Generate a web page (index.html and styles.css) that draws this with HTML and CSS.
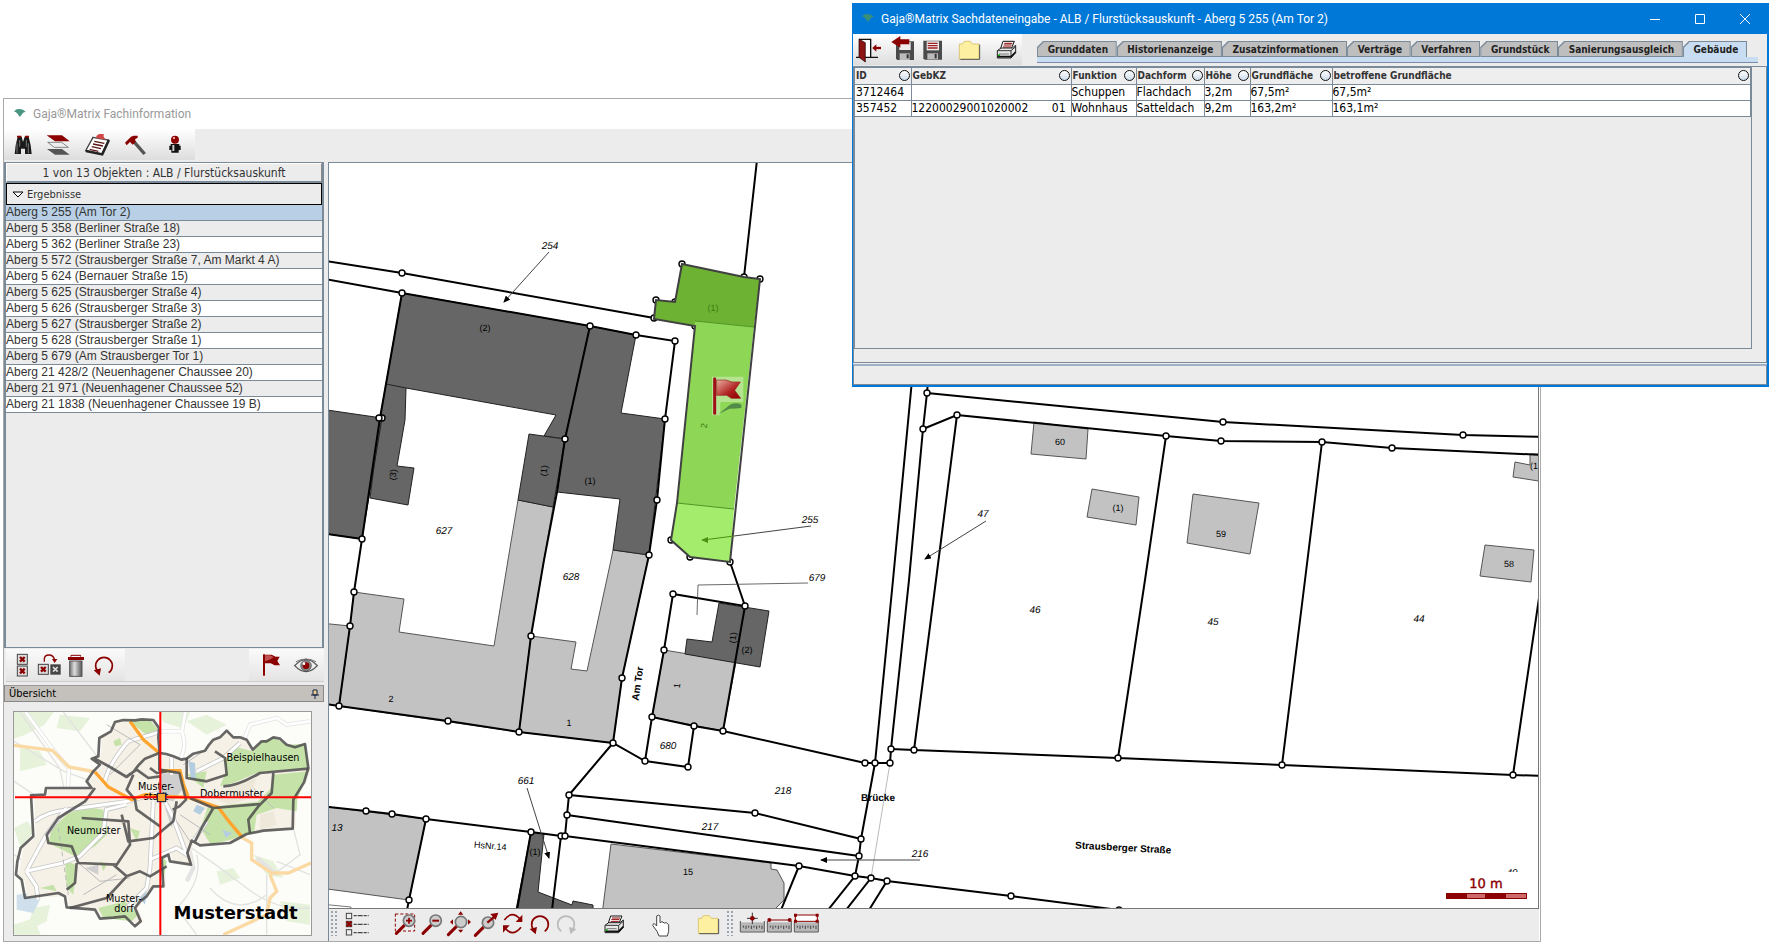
FILE: index.html
```html
<!DOCTYPE html>
<html lang="de">
<head>
<meta charset="utf-8">
<title>Gaja®Matrix Fachinformation</title>
<link rel="stylesheet" href="styles.css">
</head>
<body>
<svg class="defs" aria-hidden="true">
  <defs>
    <linearGradient id="redFade" x1="0" y1="0" x2="1" y2="1"><stop offset="0" stop-color="#e8b0a0"/><stop offset=".6" stop-color="#b02020"/><stop offset="1" stop-color="#8b0000"/></linearGradient>
    <linearGradient id="steel" x1="0" x2="1"><stop offset="0" stop-color="#777"/><stop offset=".4" stop-color="#ddd"/><stop offset="1" stop-color="#555"/></linearGradient>
    <g id="cross"><rect width="30" height="30" fill="#ddd" stroke="#444" stroke-width="3"/><path d="M8 8L22 22M22 8L8 22" stroke="#8b0000" stroke-width="7"/></g>
    <g id="flag"><path d="M11 4h22l12 6h12l-7 13 8 13H42L30 30H13z" fill="#8b0000"/><path d="M13 6h16l10 6-14 8-12 4z" fill="#c05050"/><rect x="7" y="3" width="6" height="64" fill="#8b0000"/></g>
    <g id="undo"><path d="M19 55A25 25 0 1 1 47 55" fill="none" stroke="currentColor" stroke-width="5"/><path d="M2 48L24 42 20 64z" fill="currentColor"/></g>
    <g id="lens"><path d="M4 60L28 36" stroke="#8b0000" stroke-width="9" stroke-linecap="round"/><circle cx="42" cy="22" r="17" fill="#ccc" stroke="#777" stroke-width="5"/></g>
    <g id="folder"><path d="M1 14h10l5-8h18l6 8h20v46H1z" fill="#fdf0a0" stroke="#d0b050" stroke-width="2"/><path d="M4 60h58V16" fill="none" stroke="#555" stroke-width="3"/></g>
    <g id="printer"><path d="M20 4h34L44 28H12z" fill="#fff" stroke="#111" stroke-width="3"/><path d="M24 10h24M22 15h24M20 21h24" stroke="#8b0000" stroke-width="3"/><path d="M3 32L14 24h34l10-8v22L44 54H3z" fill="#e8e8e8" stroke="#222" stroke-width="3"/><path d="M4 32h40v20M44 32l14-12" fill="none" stroke="#333" stroke-width="3"/><path d="M8 42h30" stroke="#777" stroke-width="3"/><path d="M4 50h40l14-14" stroke="#111" stroke-width="5" fill="none"/><circle cx="8" cy="46" r="3" fill="#0a0"/></g>
    <g id="ruler"><rect x="2" y="22" width="70" height="28" fill="#b8b8b8"/><path d="M1 18v33h72V18" fill="none" stroke="#555" stroke-width="3"/><path d="M10 32v6M18 32v10M26 32v6M34 32v10M42 32v6M50 32v10M58 32v6M66 32v10" stroke="#444" stroke-width="3"/></g>
    <g id="bird"><path d="M41 60l8-6 10-1 9 2 8 6-8 3-4 6-6 7-5-8-6-6z" fill="currentColor"/></g>
  </defs>
</svg>

<main class="window main-window">
  <header class="titlebar">
    <svg class="logo" viewBox="35 44 48 48"><use href="#bird"/></svg>
    <h1>Gaja®Matrix Fachinformation</h1>
  </header>
  <div class="toolbar-row">
    <nav class="toolbar top-tools" aria-label="Werkzeuge">
      <button aria-label="Suchen"><svg viewBox="34 129 72 72"><path d="M45 192l3-26 6-26h12l4 16 5-16h12l6 26 3 26H76v-16H64v16z" fill="#1a1a1a"/><path d="M52 140h13M76 140h12" stroke="#8b0000" stroke-width="5"/><path d="M52 160v30M86 160v30M60 150v20M80 150v20" stroke="#777" stroke-width="3"/></svg></button>
      <button aria-label="Ebenen"><svg viewBox="148 129 72 72"><path d="M141 136h46l23 18h-44z" fill="#8b0000"/><path d="M144 157h42l20 15h-42z" fill="#eee" stroke="#555" stroke-width="2"/><path d="M142 177h45l23 17h-44z" fill="#555"/></svg></button>
      <button aria-label="Notizen"><svg viewBox="262 129 72 72"><path d="M280 142l46 8-20 42-48-10z" fill="#fff" stroke="#444" stroke-width="4"/><path d="M328 150l-20 43-49-10" fill="none" stroke="#222" stroke-width="7"/><path d="M284 154l30 6M280 162l30 6M276 170l28 6M270 178l26 6" stroke="#5a1515" stroke-width="4"/><path d="M290 138l8-6h14v8l6 9-28-5z" fill="#d04545"/></svg></button>
      <button aria-label="Bearbeiten"><svg viewBox="376 129 72 72"><path d="M400 152l35 40" stroke="#555" stroke-width="10"/><path d="M376 158l18-18 8-3h12v6l-8 5 2 8-9 8-8-8-10 10z" fill="#8b0000"/></svg></button>
      <button aria-label="Information"><svg viewBox="490 129 72 72"><path d="M513 162h26v5h4v13h-6v8h-22v-8h-6v-13h4z" fill="#111"/><path d="M518 165h6v18h-6z" fill="#ccc"/><circle cx="526" cy="149" r="12" fill="#8b0000"/><path d="M520 141h6v6h-6z" fill="#f0a0a0"/></svg></button>
    </nav>
  </div>
  <div class="workspace">
    <aside class="sidebar">
      <div class="results">
        <p class="counter">1 von 13 Objekten : ALB / Flurstücksauskunft</p>
        <button class="group-head"><svg class="tri" viewBox="0 0 12 7"><path d="M1 1h10L6 6z" fill="#fff" stroke="#000"/></svg>Ergebnisse</button>
        <ul class="list">
          <li class="selected">Aberg 5 255 (Am Tor 2)</li>
          <li>Aberg 5 358 (Berliner Straße 18)</li>
          <li>Aberg 5 362 (Berliner Straße 23)</li>
          <li>Aberg 5 572 (Strausberger Straße 7, Am Markt 4 A)</li>
          <li>Aberg 5 624 (Bernauer Straße 15)</li>
          <li>Aberg 5 625 (Strausberger Straße 4)</li>
          <li>Aberg 5 626 (Strausberger Straße 3)</li>
          <li>Aberg 5 627 (Strausberger Straße 2)</li>
          <li>Aberg 5 628 (Strausberger Straße 1)</li>
          <li>Aberg 5 679 (Am Strausberger Tor 1)</li>
          <li>Aberg 21 428/2 (Neuenhagener Chaussee 20)</li>
          <li>Aberg 21 971 (Neuenhagener Chaussee 52)</li>
          <li>Aberg 21 1838 (Neuenhagener Chaussee 19 B)</li>
        </ul>
      </div>
      <div class="list-tools">
        <div class="toolbar">
          <button aria-label="Alle abwählen"><svg viewBox="31 34 72 72"><use href="#cross" x="53" y="38"/><use href="#cross" x="53" y="73"/></svg></button>
          <button aria-label="Auswahl umkehren"><svg viewBox="112 34 72 72"><use href="#cross" x="116" y="68"/><rect x="152" y="68" width="31" height="31" fill="#444"/><path d="M160 76l14 14M174 76l-14 14" stroke="#ddd" stroke-width="5"/><path d="M134 60v-8q0-12 14-12t17 16" fill="none" stroke="#8b0000" stroke-width="4"/><path d="M157 52h16l-8 12z" fill="#8b0000"/></svg></button>
          <button aria-label="Löschen"><svg viewBox="194 34 72 72"><rect x="211" y="58" width="37" height="46" fill="url(#steel)" stroke="#555" stroke-width="3"/><rect x="206" y="46" width="48" height="9" fill="#8b0000"/><path d="M215 45v-4h29v4" fill="none" stroke="#8b0000" stroke-width="3"/></svg></button>
          <button class="red" aria-label="Zurück"><svg viewBox="275 34 72 72"><use href="#undo" x="281" y="38"/></svg></button>
        </div>
        <div class="toolbar right">
          <button aria-label="Fahne"><svg viewBox="780 34 72 72"><use href="#flag" x="785" y="35"/></svg></button>
          <button aria-label="Anzeigen"><svg viewBox="884 34 72 72"><path d="M886 72q34-38 68 0-34 36-68 0z" fill="#eee" stroke="#555" stroke-width="4"/><path d="M890 60q30-16 60 0" fill="none" stroke="#777" stroke-width="3"/><circle cx="920" cy="72" r="16" fill="#8a8a8a" stroke="#444" stroke-width="2"/><circle cx="920" cy="72" r="10" fill="#8b0000"/><circle cx="914" cy="66" r="4" fill="#fff"/></svg></button>
        </div>
      </div>
      <section class="overview">
        <h2 class="overview-head">Übersicht<svg class="pin" viewBox="0 0 8 10"><path d="M2 1h4v5H2zM0 6h8M4 6v4" fill="#f0d090" stroke="#124"/></svg></h2>
        <div class="overview-body">
          <svg class="minimap" viewBox="42 212 891 669" role="img" aria-label="Übersicht Musterstadt">
            <rect x="42" y="212" width="891" height="669" fill="#fcfcf9"/>
            <g fill="#e6f2d9"><path d="M42 212h120l-30 40-60 30-30 10zM180 220l90 10-30 40-70-10zM60 320l60 10 20 40-80 20zM42 560l40-20 20 30-40 50zM100 800l50-10-10 50-60 30zM560 240l60-20 60 30-60 30zM760 640l60 20 30 50-50-10zM480 212h90l-20 50-60-20zM650 690l50-10 20 30-60 20zM840 780l90 10v60l-70-10zM42 850l60-20 20 50H42z"/></g>
            <path d="M50 760l40-5 30 20-20 40-50-10zM120 595l60 20 20 50" fill="#cfe0ec"/>
            <g fill="none" stroke="#e2e2e2" stroke-width="4"><path d="M42 300l150 90 110 40M60 212l120 170 20 100-30 80 50 200M190 212l130 170 50 70M560 610q90 60 180 130t190 60M590 640q20 80-60 160l60 80M630 740q80 90 170 20M800 700v180M830 660l100 40M42 420l60 40M42 640l60 40M880 560l20 80-80 60"/></g>
            <g fill="none" stroke="#e4e4e4" stroke-width="13"><path d="M77 212l80 110 50 60-10 180-110 130M480 270h66l10-58M546 270q20 60-20 100M730 300l20-50 80-20 30 20 70-10M770 650l60 50M560 590l20 90-20 40"/></g>
            <g fill="none" stroke="#fff" stroke-width="8"><path d="M77 212l80 110 50 60-10 180-110 130M480 270h66l10-58M546 270q20 60-20 100M730 300l20-50 80-20 30 20 70-10"/></g>
            <path d="M42 312l115 15 50 50 80 15M720 585l35 20v50l60 40h50l68-30M810 700l20 50-20 20-10 50-130 60" fill="none" stroke="#fbd9a3" stroke-width="10"/>
            <path id="land" d="M345 242l60-8 55 2 17 24 2 75 41 10 40 7 55-24 25-33 40-27 20 20 40 7 18 30 27-25 35-12 40 22 55-2 10 72 8 2-13 38-32 55-2 87-138 16-50 27-90 7-25-14-13 37 11 35-63-10-5-20-20 10 5 85-30 0-40 45-15 20 17 40-17 15-30-30-75 7-15-27-85-7-5-33-120 5-10-55-17-15 14-80 38-35-7-123 42-2 3-20 137 0-15-20 20-30 20-20-25-18 20-7 3-55 35-20z" fill="#f6f1e6"/>
            <g fill="#c5e3a9"><path d="M758 330l27-30 35-12 40 22 55-2 10 72-75 5-80 10-70 30-40 10 20-50-15-40 35-30zM822 400l100-10-30 85-2 35-60-10-60 20-8 55-70 20-60 15-30-50 20-60 60-10 90-8 40-40zM200 520l50-25 60 10 15 70-40 40-60 30-80-40 10-40zM195 660l35 10-10 90-20-20zM390 240l60-4 25 30-30 20zM310 830l-15-30 80-20 40 40-20 20zM560 400l60-10-10 50z"/><path d="M340 300l20-10 5 20-20 5zM300 660l20 10-10 20zM390 560l30 10-10 30zM120 740l40-10 10 20zM480 640l20 20-10 60zM590 640l20-20z"/></g>
            <g fill="#eee8db"><path d="M720 420l50-10-20 60-60 20-50-20zM780 520l40-10 10 40-50 15z"/></g>
            <path d="M480 400l50-10 20 50-30 40-50-10zM495 500l30 20-10 40zM255 680l40-10v30z" fill="#cfcfcf"/>
            <path d="M565 360l20 5 3 50-15-5zM590 490l25 10-15 20-20-10zM667 565l30 10-20 15zM420 770l20-20-5 40z" fill="#b5cde0"/>
            <g fill="none" stroke="#c8c8c8" stroke-width="14"><path d="M104 540q40-30 100-35l180-25 90-25M79 690l60-110 60-80M79 690l110-25 50-20 70-70 10-70 60-15M79 690l30 45 5 40M315 420q10-50 70-120l100-30M460 480l-10 200-10 60-60 60M480 450l40 80 40 110-30-20-80 35M515 350v50M590 390l80-40 50-45M580 600l40-60"/></g>
            <g fill="none" stroke="#fff" stroke-width="9"><path d="M104 540q40-30 100-35l180-25 90-25M79 690l60-110 60-80M79 690l110-25 50-20 70-70 10-70 60-15M79 690l30 45 5 40M315 420q10-50 70-120l100-30M460 480l-10 200-10 60-60 60M480 450l40 80 40 110-30-20-80 35M515 350v50M590 390l80-40 50-45M580 600l40-60"/></g>
            <g fill="none" stroke="#bbb" stroke-width="3"><path d="M330 400l90-90-100-60M230 660l70 60 90-10M250 760l100-60M610 330l-60 40M540 520l90 60M760 440l60 60M530 540l40 60"/><path d="M175 560l30 200" stroke-dasharray="14 10"/></g>
            <path d="M390 240l40 55 48 40M480 388h60l10 40 15 40 90 30 30 40 40 48M285 392l40 45 70 38 40-15 60 5 70 3" fill="none" stroke="#ffa42e" stroke-width="10"/>
            <g fill="none" stroke="#4c4c4c" stroke-opacity=".85" stroke-width="8" stroke-linejoin="round">
              <path d="M345 242l25-6 35 1 20-3 35 2 17 24-2 30 4 45 20 3 21 7 25 10 15-3 20-15 35-9 10-15 15-18 20-7 20-20 20 20 20 0 20 7 18 30 27-25 15 0 20-12 20 4 20 18 25 8 30-10 10 72-13 43-32 52-2 87-88 6-50 10-50 27-90 7-25-14-13 37 11 35-63-10-5-20-20 10 5 85-30 0-20 30-20 15-15 20 17 40-17 15-30-30-35 4-40 3-15-27-85-7-5-33-20-10-100 15-10-55-17-15 4-40 10-40 38-35-7-123 42-2 3-20 137 0-15-20 20-30 20-20-25-18 20-7 3-55 35-20z"/>
              <path d="M285 352l45 25 50 30 20-15 15-20 20-20 43-17M400 400l-20 45 25 30 5 30 70 50M380 405l30-20 35 25 35-5M478 335v50l60 10 20 80-20 20-20 10M560 350v60l60 10 60-20-5-50-30-20M670 435q40 0 110-40l145-13M820 395l-5 60-40 40-30 40 5 40M570 470l70 30 140-12M640 500l-35 60-20 40M285 440l-30 40-80 50-35 50 5 25 70 10 20 50 115 5 40-60-5-70-140-10M365 520l20 80 75-10 60-50 10-60M230 665l-5 60-25 20M340 670l40 35 40-15 30 15 50-30M380 705l-60 65-110 30M450 380l20 15 30-5"/>
            </g>
            <g class="mini-labels">
              <text x="789" y="360">Beispielhausen</text><text x="695" y="467">Dobermuster</text><text x="468" y="447">Muster-</text><text x="468" y="476">stadt</text><text x="281" y="578">Neumuster</text><text x="372" y="783">Muster-</text><text x="372" y="812">dorf</text>
            </g>
            <text class="mini-title" x="707" y="833">Musterstadt</text>
            <path d="M481 212v669M45 468h888" stroke="#f00" stroke-width="6"/>
            <rect x="472" y="456" width="25" height="25" fill="#ffa832" stroke="#101840" stroke-width="3"/>
          </svg>
        </div>
      </section>
    </aside>

    <section class="map-pane">
      <svg class="map" role="img" aria-label="Flurkarte">
        <defs>
          <marker id="node" markerUnits="userSpaceOnUse" markerWidth="8" markerHeight="8" refX="4" refY="4"><circle cx="4" cy="4" r="3" fill="#fff" stroke="#000" stroke-width="1.4"/></marker>
          <marker id="tip" markerUnits="userSpaceOnUse" markerWidth="8" markerHeight="6" refX="6" refY="3" orient="auto"><path d="M0 0l7 3-7 3z"/></marker>
        </defs>
        <g transform="translate(-329 -163)">
          <g class="light">
            <path d="M518 500L553 507 544 560 531 636 519 732 339 706 350 626 354 592 404 599 399 632 494 646 508 560z"/>
            <path d="M613 550L649 555 622 678 613 743 519 732 531 636 576 642 571 669 587 671 611 560z"/>
            <path d="M320 623L350 626 339 706 320 703z"/>
            <path d="M664 650L736 662 723 731 652 717z"/>
            <path d="M320 806L426 819 409 900 320 888z"/>
            <path d="M611 844L771 863V869L777 870 784 883V900L776 908 774 915H602z"/>
            <path d="M1034 422L1088 429 1086 459 1031 454z"/><path d="M1092 489L1139 497 1136 525 1087 517z"/>
            <path d="M1193 494L1259 503 1250 554 1187 543z"/><path d="M1485 545L1534 550 1531 582 1480 576z"/>
            <path d="M1530 454H1545V482L1513 477 1515 462 1530 465z"/>
          </g>
          <path d="M320 904L351 907V915H320z" fill="#fff" stroke="#555" stroke-width=".8"/>
          <g class="dark">
            <path d="M402 293L590 326 565 439 544 436 556 415 406 388 405 420 397 466 414 468 408 505 370 498 380 418 386 384z"/>
            <path d="M590 326L636 335 621 413 665 419 649 555 613 550 620 499 557 492 565 439z"/>
            <path d="M529 434L565 439 553 507 518 500z"/>
            <path d="M320 409L382 418 362 539 320 533z"/>
            <path d="M719 603L769 611 760 667 685 654 687 639 712 642z"/>
            <path d="M531 832L544 834 538 892 572 905 573 901 593 905V915H515z"/>
            <path d="M386 384L406 388" fill="none"/>
          </g>
          <g class="border">
            <path d="M320 260L402 273 654 318M320 278L402 293 590 326 636 335 675 341 665 419 657 500 649 555 622 678 613 743"/>
            <path d="M402 293L386 384 380 418 362 539 354 592 350 626 339 706M320 533L362 539"/>
            <path d="M590 326L565 439 557 492 544 560 531 636 519 732"/>
            <path d="M320 703L339 706 448 721 519 732 613 743 645 761 688 767 694 726M645 761L652 717 664 650 673 594 745 606 723 731M652 717L694 726 723 731 865 763H890M745 606L730 562"/>
            <path d="M613 743L569 795 567 815 565 836M569 795L755 813 861 839M567 815L859 856"/>
            <path d="M320 806L366 811 392 814 426 819 531 832 561 836 565 836 799 866 855 876 871 878 887 881 1011 896 1119 910"/>
            <path d="M912 380L893 580 875 763 861 839 859 856 855 876 828 910M871 878L846 910M887 881L869 910M799 866L781 910M426 819L409 900 407 910M531 832L517 910M561 836L552 910"/>
            <path d="M929 370L927 393 923 429 909 580 891 749 890 763M927 393L1223 422 1463 435 1545 437M923 429L957 415 1166 436 1221 441 1322 442 1392 448 1545 455"/>
            <path d="M957 415L936 580 914 750M1166 436L1145 580 1118 758M1322 442L1305 580 1282 765M1539 598L1521 720 1513 775M891 749L914 750 1118 758 1282 765 1513 775 1545 776M757 160L744 277"/>
          </g>
          <path d="M890 763L871 878" stroke="#bbb" fill="none"/>
          <path class="nodes" d="M402 273L654 318 402 293 590 326 636 335 675 341 665 419 657 500 649 555 622 678 613 743 382 418 379 418 362 539 354 592 350 626 339 706 565 439 531 636 519 732 448 721 645 761 688 767 694 726 652 717 664 650 673 594 745 606 723 731 865 763 875 763 890 763 569 795 567 815 561 836 565 836 755 813 861 839 859 856 366 811 392 814 426 819 531 832 799 866 855 876 871 878 887 881 1011 896 1119 910 409 900 927 393 923 429 1223 422 1463 435 957 415 1166 436 1221 441 1322 442 1392 448 891 749 914 750 1118 758 1282 765 1513 775 682 264 744 277 760 279 656 300 675 302 695 326 671 540 690 557 730 562"/>
          <path d="M682 264L744 277 760 279 754 327 695 321V326L654 319 656 300 675 302z" fill="#6eb233"/>
          <path d="M695 321L754 327 734 509 677 503z" fill="#8ed656"/>
          <path d="M677 503L734 509 730 562 690 557 671 540z" fill="#a4ec6c"/>
          <path d="M695 321L754 327M677 503L734 509" stroke="#4d9420" stroke-width="1"/>
          <path d="M682 264L744 277 760 279 730 562 690 557 671 540 677 503 695 326 654 319 656 300 675 302z" fill="none" stroke="#404040" stroke-width="2"/>
          <g class="leader">
            <path d="M549 252L504 302"/><path d="M811 526L734 536"/><path d="M986 521L925 559"/><path d="M527 788L549 858"/><path d="M920 860H821"/>
          </g>
          <path d="M734 536L703 540" stroke="#4a9012"/><path d="M701 540l7-3v6z" fill="#4a9012"/>
          <path d="M808 583L698 585 697 615" fill="none" stroke="#444" stroke-width=".8"/>
          <g class="parcel">
            <text x="550" y="249">254</text><text x="444" y="534">627</text><text x="571" y="580">628</text><text x="810" y="523">255</text><text x="817" y="581">679</text><text x="668" y="749">680</text><text x="526" y="784">661</text><text x="783" y="794">218</text><text x="710" y="830">217</text><text x="920" y="857">216</text><text x="983" y="517">47</text><text x="1035" y="613">46</text><text x="1213" y="625">45</text><text x="1419" y="622">44</text>
            <text x="337" y="831">13</text>
          </g>
          <g class="house">
            <text x="485" y="331">(2)</text><text x="590" y="484">(1)</text><text transform="translate(396 475) rotate(-84)">(3)</text><text transform="translate(547 471) rotate(-84)">(1)</text><text transform="translate(736 638) rotate(-84)">(1)</text><text x="747" y="653">(2)</text><text x="391" y="702">2</text><text x="569" y="726">1</text><text transform="translate(680 686) rotate(-84)">1</text><text transform="translate(490 849) rotate(5)">HsNr.14</text><text x="535" y="855">(1)</text><text x="688" y="875">15</text><text x="1060" y="445">60</text><text x="1118" y="511">(1)</text><text x="1221" y="537">59</text><text x="1509" y="567">58</text><text x="1534" y="469">(1</text>
            <text x="713" y="311" fill="#3d7d10">(1)</text><text transform="translate(707 426) rotate(-84)" fill="#3d7d10">2</text>
          </g>
          <svg x="1504" y="866" width="16" height="6"><text class="cut" x="8" y="10">49</text></svg>
          <g class="street"><text transform="translate(641 684) rotate(-82)">Am Tor</text><text x="878" y="801">Brücke</text><text transform="translate(1123 851) rotate(3)">Strausberger Straße</text></g>
          <svg x="712" y="376" width="32" height="44" viewBox="0 0 96 132" overflow="visible"><path d="M0 2h94v76H25v40H0z" fill="#fff" opacity=".35"/><path d="M20 114l34-28q20-8 34 0v10q-16 2-36 2z" fill="#474" opacity=".8"/><path d="M14 12h28l18 6h25L68 43l18 24H58l-14-9H14z" fill="url(#redFade)" stroke="#922" stroke-width="2"/><path d="M8 8v104" stroke="#a01018" stroke-width="9" stroke-linecap="round"/></svg>
          <text class="scale" x="1486" y="888">10 m</text>
          <path d="M1446 893h81v6h-81z" fill="#8b0000"/><path d="M1467 894h18v4h-18zM1506 894h20v4h-20z" fill="#cd6b6b"/>
        </g>
      </svg>
      <div class="map-tools toolbar" role="toolbar" aria-label="Kartenwerkzeuge">
        <span class="grip"></span>
        <button aria-label="Legende"><svg viewBox="79 64 72 72"><g fill="#eee" stroke="#444" stroke-width="3"><rect x="83" y="68" width="16" height="16"/><rect x="83" y="92" width="16" height="16"/><rect x="83" y="117" width="16" height="16"/></g><path d="M84 93l14 14M98 93l-14 14" stroke="#8b0000" stroke-width="7"/><path d="M105 75h45M105 101h45M105 126h45" stroke="#444" stroke-width="4" stroke-dasharray="9 3 15 3"/></svg></button>
        <button class="sp-l" aria-label="Vergrößern"><svg viewBox="222 64 72 72"><rect x="229" y="70" width="58" height="51" fill="none" stroke="#8b0000" stroke-width="3" stroke-dasharray="9 6"/><use href="#lens" x="228" y="68"/><path d="M270 81v18M261 90h18" stroke="#8b0000" stroke-width="5"/></svg></button>
        <button aria-label="Verkleinern"><svg viewBox="303 64 72 72"><use href="#lens" x="308" y="68"/><path d="M340 90h20" stroke="#8b0000" stroke-width="6"/></svg></button>
        <button aria-label="Gesamtansicht"><svg viewBox="384 64 72 72"><use href="#lens" x="384" y="72"/><path d="M417 72l8-10 8 10zM417 117l8 9 8-9zM402 86l-9 8 9 8zM447 86l9 8-9 8z" fill="#8b0000"/></svg></button>
        <button aria-label="Zoom auf Auswahl"><svg viewBox="465 64 72 72"><use href="#lens" x="465" y="74"/><path d="M505 96l22-18" stroke="#8b0000" stroke-width="7"/><path d="M514 70l24-4-8 22z" fill="#8b0000"/></svg></button>
        <button aria-label="Aktualisieren"><svg viewBox="546 64 72 72"><path d="M556 88q22-30 46-4M606 110q-24 30-46 4" fill="none" stroke="#8b0000" stroke-width="5"/><path d="M610 72v22h-20zM552 126v-22h20z" fill="#8b0000"/></svg></button>
        <button class="red" aria-label="Vorherige Ansicht"><svg viewBox="627 64 72 72"><use href="#undo" x="630" y="67"/></svg></button>
        <button class="off" disabled aria-label="Nächste Ansicht"><svg viewBox="708 64 72 72"><g transform="translate(774 67) scale(-1 1)"><use href="#undo"/></g></svg></button>
        <button class="sp-m" aria-label="Drucken"><svg viewBox="846 64 72 72"><use href="#printer" x="852" y="72"/></svg></button>
        <button class="sp-m" aria-label="Auswählen"><svg viewBox="987 64 72 72"><path d="M1010 76q5-5 10 0v20l6-3 7 4 6-1 7 6v20l-4 14h-25l-6-14-13-18 4-6 8 8z" fill="#fff" stroke="#444" stroke-width="3"/></svg></button>
        <button class="sp-m" aria-label="Öffnen"><svg viewBox="1125 64 72 72"><use href="#folder" x="1131" y="69"/></svg></button>
        <span class="grip grip-second"></span>
        <button aria-label="Koordinate messen"><svg viewBox="1263 64 72 72"><use href="#ruler" x="1263" y="73"/><path d="M1300 66v34M1284 83h32" stroke="#333" stroke-width="3"/><circle cx="1300" cy="83" r="7" fill="#8b0000"/></svg></button>
        <button aria-label="Strecke messen"><svg viewBox="1344 64 72 72"><use href="#ruler" x="1344" y="73"/><path d="M1350 88h62" stroke="#8b0000" stroke-width="3"/><circle cx="1351" cy="88" r="6" fill="#8b0000"/><circle cx="1412" cy="88" r="6" fill="#8b0000"/></svg></button>
        <button aria-label="Fläche messen"><svg viewBox="1425 64 72 72"><use href="#ruler" x="1425" y="73"/><rect x="1429" y="73" width="66" height="19" fill="#fff" stroke="#8b0000" stroke-width="3"/><path d="M1425 69h9v9h-9zM1490 69h9v9h-9zM1425 87h9v9h-9zM1490 87h9v9h-9z" fill="#8b0000"/></svg></button>
      </div>
    </section>
  </div>
</main>

<section class="window dialog" aria-label="Sachdateneingabe">
  <header class="titlebar">
    <svg class="logo" viewBox="35 44 48 48"><use href="#bird"/></svg>
    <h1>Gaja®Matrix Sachdateneingabe - ALB / Flurstücksauskunft - Aberg 5 255 (Am Tor 2)</h1>
    <div class="controls">
      <button aria-label="Minimieren"><svg viewBox="0 0 12 12"><path d="M1 6.500h10" stroke="#fff"/></svg></button>
      <button aria-label="Maximieren"><svg viewBox="0 0 12 12"><path d="M1.500 1.500h9v9h-9z" fill="none" stroke="#fff"/></svg></button>
      <button aria-label="Schließen"><svg viewBox="0 0 12 12"><path d="M1 1l10 10M11 1L1 11" stroke="#fff"/></svg></button>
    </div>
  </header>
  <div class="dialog-bar">
    <nav class="toolbar dialog-tools" aria-label="Aktionen">
      <button aria-label="Beenden"><svg viewBox="17 112 72 72"><path d="M17 170h66M28 170v-54h33v54" fill="#fff" stroke="#111" stroke-width="4"/><path d="M26 115l19 11v58l-19-14z" fill="#8b1515" stroke="#200" stroke-width="2"/><path d="M72 142h20" stroke="#8b0000" stroke-width="7"/><path d="M66 142l12-11v22z" fill="#8b0000"/></svg></button>
      <button aria-label="Speichern und zurück"><svg viewBox="119 112 72 72"><path d="M140 122h54v56h-50l-4-4z" fill="#4a4a4a"/><path d="M150 124h34v24h-34z" fill="#eee"/><path d="M151 158h30v20h-30z" fill="#bbb"/><path d="M172 161h6v12h-6z" fill="#333"/><path d="M126 124l27-18v10h27v15h-27v10z" fill="#8b0000"/></svg></button>
      <button aria-label="Speichern"><svg viewBox="209 112 72 72"><path d="M219 120h56v57h-52l-4-4z" fill="#4a4a4a"/><path d="M229 122h37v27h-37z" fill="#eee"/><path d="M232 128h30M232 135h30M232 142h30" stroke="#a02020" stroke-width="4"/><path d="M231 158h32v18h-32z" fill="#bbb"/><path d="M253 160h6v13h-6z" fill="#333"/></svg></button>
      <button class="sp-s" aria-label="Öffnen"><svg viewBox="320 112 72 72"><use href="#folder" x="326" y="116"/></svg></button>
      <button class="sp-s" aria-label="Drucken"><svg viewBox="431 112 72 72"><use href="#printer" x="438" y="118"/></svg></button>
    </nav>
    <div class="tabs" role="tablist">
      <button role="tab"><span>Grunddaten</span></button><button role="tab"><span>Historienanzeige</span></button><button role="tab"><span>Zusatzinformationen</span></button><button role="tab"><span>Verträge</span></button><button role="tab"><span>Verfahren</span></button><button role="tab"><span>Grundstück</span></button><button role="tab"><span>Sanierungsausgleich</span></button><button role="tab" class="active" aria-selected="true"><span>Gebäude</span></button>
    </div>
  </div>
  <div class="table-frame">
    <div class="table-view">
      <table>
        <colgroup><col class="c-id"><col class="c-kz"><col class="c-fn"><col class="c-df"><col class="c-ho"><col class="c-gf"><col></colgroup>
        <thead><tr><th><span>ID<i></i></span></th><th><span>GebKZ<i></i></span></th><th><span>Funktion<i></i></span></th><th><span>Dachform<i></i></span></th><th><span>Höhe<i></i></span></th><th><span>Grundfläche<i></i></span></th><th><span>betroffene Grundfläche<i></i></span></th></tr></thead>
        <tbody>
          <tr><td>3712464</td><td></td><td>Schuppen</td><td>Flachdach</td><td>3,2m</td><td>67,5m²</td><td>67,5m²</td></tr>
          <tr><td>357452</td><td><span class="split"><span>12200029001020002</span><span>01</span></span></td><td>Wohnhaus</td><td>Satteldach</td><td>9,2m</td><td>163,2m²</td><td>163,1m²</td></tr>
        </tbody>
      </table>
    </div>
  </div>
  <footer class="status"></footer>
</section>
</body>
</html>
```

FILE: styles.css
```css
* { box-sizing: border-box; }
body {
  margin: 0;
  height: 100vh;
  position: relative;
  overflow: hidden;
  background: #fff;
  color: #222;
  font-family: "DejaVu Sans Condensed", "DejaVu Sans", sans-serif;
  font-size: 12px;
}
.defs { position: absolute; width: 0; height: 0; }
h1, h2, p, ul { margin: 0; padding: 0; font-weight: normal; }
ul { list-style: none; }
button { border: 0; padding: 0; background: none; font: inherit; color: inherit; }
svg { display: block; }

.window { position: absolute; display: flex; flex-direction: column; }
.main-window { inset: 98px 232px 0 3px; border: 1px solid #aaa; background: #fff; }
.titlebar { display: flex; align-items: center; height: 30px; padding-left: 8px; }
.titlebar h1 { font: 12px Roboto, sans-serif; }
.logo { width: 16px; height: 16px; margin-right: 5px; color: #4a9580; }
.main-window .titlebar h1 { color: #999; }

.toolbar { display: flex; align-items: center; background: linear-gradient(#fff, #ddd); }
.toolbar button { width: 24px; height: 24px; flex: none; }
.toolbar svg { width: 24px; height: 24px; overflow: visible; }
.red { color: #8b0000; }
.off { color: #bbb; }
.toolbar-row { height: 33px; padding-bottom: 2px; background: #ececec; display: flex; }
.top-tools { width: 191px; padding-left: 7px; gap: 14px; }

.workspace { flex: 1; min-height: 0; display: flex; gap: 4px; background: #ececec; }
.sidebar { width: 320px; flex: none; display: flex; flex-direction: column; }
.results { flex: 1; min-height: 0; border: 1px solid #7a8a99; border-left-width: 2px; border-right-width: 2px; background: #ececec; }
.counter { height: 20px; line-height: 19px; text-align: center; color: #333; border: 1px solid #fff; border-right-color: #888; border-bottom: 2px solid #7a8a99; }
.group-head { display: flex; align-items: center; gap: 3px; width: 100%; height: 22px; padding-left: 5px; border: 1px solid #000; font-size: 11px; color: #333; }
.tri { width: 12px; height: 7px; }
.list li { height: 16px; line-height: 15px; font-family: "Liberation Sans", Arial, sans-serif; border-bottom: 1px solid #7a8a99; white-space: nowrap; color: #333; }
.list li:nth-child(odd) { background: #fff; }
.list li.selected { background: #b8cfe5; }
.list-tools { display: flex; justify-content: space-between; height: 33px; margin: 1px 0 3px 2px; border-bottom: 1px solid #ccc; }
.list-tools .toolbar { padding: 0 10px 0 4px; gap: 3px; background: linear-gradient(#fafafa, #e4e4e4); }
.list-tools .toolbar.right { gap: 11px; padding: 0 6px 0 10px; }
.overview-head { display: flex; align-items: center; justify-content: space-between; height: 17px; padding: 0 4px; font-size: 11px; color: #000; background: #c4c0bb; border: 1px solid #888; border-top-color: #999; }
.pin { width: 8px; height: 10px; }
.overview-body { padding: 9px 12px 5px 9px; }
.minimap { width: 100%; border: 1px solid #999; }
.mini-labels { font-size: 29px; text-anchor: middle; font-family: "DejaVu Sans", sans-serif; fill: #000; }
.mini-title { font: bold 54px "DejaVu Sans", sans-serif; text-anchor: middle; }

.map-pane { flex: 1; min-width: 0; display: flex; flex-direction: column; border: 1px solid #7a8a99; border-width: 1px 1px 0 1px; border-right-color: #fff; }
.map { flex: 1; min-height: 0; width: 100%; background: #fff; border-right: 1px solid #777; font-family: "Liberation Sans", Arial, sans-serif; text-rendering: geometricPrecision; }
.map-tools { height: 33px; padding: 0 0 3px 2px; background: #ececec; border-top: 1px solid #777; gap: 3px; }
.grip { width: 8px; height: 25px; margin-right: 3px; background: radial-gradient(circle at 1px 1px, #9aa4ae 1px, transparent 1px) 0 0 / 4px 4px; }
.grip-second { margin-left: 4px; margin-right: 2px; }
.map-tools .sp-l { margin-left: 21px; }
.map-tools .sp-m { margin-left: 20px; }
.light { fill: #c2c2c2; stroke: #555; stroke-width: 1; }
.dark { fill: #666; stroke: #222; stroke-width: 1; }
.border { fill: none; stroke: #000; stroke-width: 2; }
.nodes { fill: none; stroke: none; marker: url(#node); }
.leader { stroke: #444; stroke-width: 1; }
.leader path { marker-end: url(#tip); }
.leader path:nth-child(2) { marker-end: none; }
.parcel { font-size: 10px; font-style: italic; text-anchor: middle; }
.house { font-size: 9px; text-anchor: middle; }
.cut { font-size: 10px; font-style: italic; text-anchor: middle; }
.street { font-size: 10px; font-weight: bold; text-anchor: middle; }
.scale { font: 13px "DejaVu Sans", sans-serif; fill: #8b0000; stroke: #8b0000; stroke-width: .4; text-anchor: middle; }

.dialog { inset: 3px 4px auto 852px; background: #ececec; border: 1px solid #0078d7; border-width: 1px 2px 2px 1px; }
.dialog .titlebar { background: #0078d7; color: #fff; padding-left: 7px; }
.dialog .logo { color: #3a8f78; }
.controls { margin-left: auto; display: flex; }
.controls button { width: 45px; height: 28px; display: grid; place-items: center; }
.controls svg { width: 12px; height: 12px; }
.dialog-bar { display: flex; height: 31px; }
.dialog-tools { width: 169px; flex: none; padding-left: 3px; gap: 9px; }
.dialog-tools button:nth-child(3) { margin-left: -2px; }
.dialog-tools .sp-s { margin-left: 4px; }
.tabs { flex: 1; display: flex; align-items: flex-end; height: 28px; margin: 0 9px 0 15px; border-bottom: 5px solid #c8ddf2; box-shadow: 0 1px #7a8aa9; font-size: 10px; font-weight: bold; color: #222; }
.tabs button { position: relative; flex: 1 1 auto; height: 16px; padding: 0 8px 0 10px; background: #7a8a99; clip-path: polygon(0 100%, 0 6px, 6px 0, 100% 0, 100% 100%); }
.tabs button::before { content: ""; position: absolute; inset: 1px; background: #bebebe; clip-path: polygon(0 100%, 0 6px, 6px 0, 100% 0, 100% 100%); }
.tabs .active::before { background: #c8ddf2; bottom: 0; }
.tabs button span { position: relative; }
.tabs button:last-child { margin-right: 11px; }
.table-frame { border: 1px solid #7a8a99; margin-top: 1px; padding: 0 14px 13px 0; }
.table-view { min-height: 282px; border: 1px solid #7a8a99; }
table { width: 100%; table-layout: fixed; border-collapse: collapse; color: #000; }
th, td { height: 16px; padding: 0 1px 0 0; border: 1px solid #7a8a99; text-align: left; white-space: nowrap; line-height: 14px; overflow: hidden; }
td:first-child { padding-left: 1px; }
th:first-child, td:first-child { border-left: 0; }
th { font-size: 10px; color: #333; background: #eee; border-top: 0; padding-left: 1px; }
td { background: #fff; }
th span, .split { display: flex; justify-content: space-between; align-items: center; }
.split { padding-right: 4px; }
th i { width: 11px; height: 11px; flex: none; border: 1px solid #111; border-radius: 50%; background: linear-gradient(#fff, #cddcec); }
.c-id { width: 56px; }
.c-kz { width: 160px; }
.c-fn { width: 65px; }
.c-df { width: 68px; }
.c-ho { width: 46px; }
.c-gf { width: 82px; }
.status { height: 21px; margin-top: 1px; border: 1px solid #7a8a99; border-top: 2px solid #9fb2c6; }
```
